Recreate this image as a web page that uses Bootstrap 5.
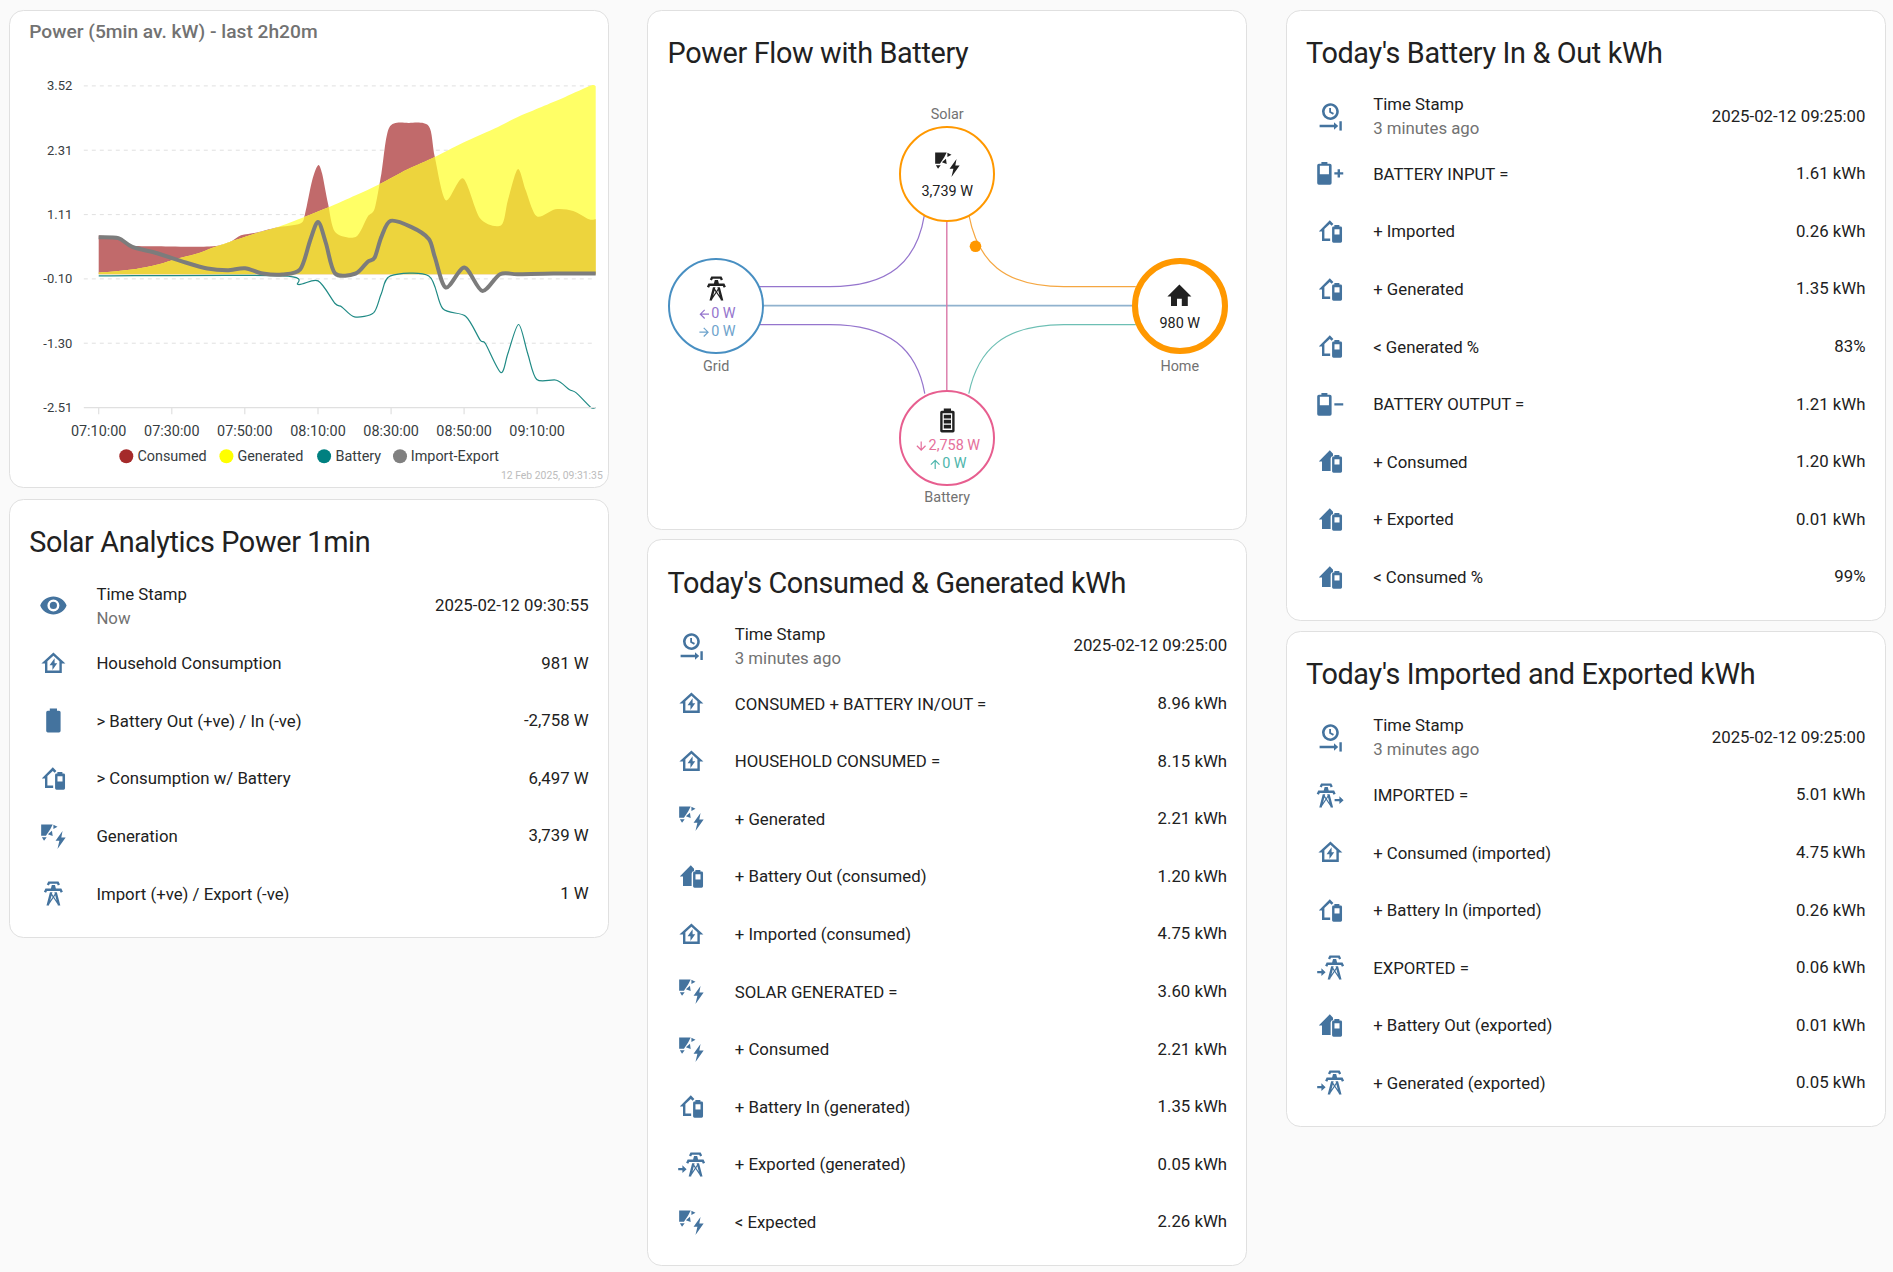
<!DOCTYPE html>
<html lang="en">
<head>
<meta charset="utf-8">
<title>Solar dashboard</title>
<link href="https://cdn.jsdelivr.net/npm/bootstrap@5.3.0/dist/css/bootstrap.min.css" rel="stylesheet">
<style>
html,body{background:#fafafa;}
body{font-family:Roboto,"Liberation Sans",sans-serif;color:#212121;font-size:16.8px;margin:0;}
.board{gap:38.5px;padding:9.6px 7.4px 0 9px;}
.lane{flex:1 1 0;min-width:0;gap:9.6px;}
.tile{border:1.2px solid #e0e0e0;border-radius:14.4px;background:#fff;}
.tile-chart{margin-bottom:1.2px;}
.hdr{font-size:28.8px;letter-spacing:-0.012em;line-height:48px;height:81.6px;padding:18.4px 19.2px 0;color:#212121;}
.ents{gap:9.6px;padding:0 19.2px 19.2px;}
.ent{height:48px;}
.ent-ic{width:48px;flex:none;}
.ent-ic svg{width:28.8px;height:28.8px;fill:#44739e;}
.ent-name{margin-left:19.2px;line-height:24px;}
.ent-sub{color:#727272;}
.chart-title{height:50px;padding:10px 19.2px 0;font-size:19.2px;line-height:22px;font-weight:500;color:#727272;}
.chart-box svg{display:block;}
.chart-box text{font-family:Roboto,"Liberation Sans",sans-serif;fill:#373d3f;}
.ax-y{font-size:13px;}
.ax-x{font-size:14.4px;}
.leg{font-size:14.4px;}
.stamp{font-size:10.4px;fill:#bcbcbc !important;}
.flow{height:436.6px;font-size:14.4px;}
.flow-lines{position:absolute;left:0;top:0;}
.node{position:absolute;width:96px;height:96px;border-radius:50%;border:2.4px solid;background:#fff;line-height:18px;padding-top:4px;}
.node svg{width:28.8px;height:28.8px;flex:none;fill:#212121;}
.node .arr{width:14.4px;height:14.4px;}
.n-solar{left:250.8px;top:33.6px;border-color:#ff9800;}
.n-grid{left:19.8px;top:165.4px;border-color:#488fc2;}
.n-home{left:483.4px;top:165.4px;border:6px solid #ff9800;}
.n-batt{left:250.8px;top:297.6px;border-color:#e75e8f;}
.nlabel{position:absolute;width:96px;text-align:center;color:#727272;line-height:18px;}
.l-solar{left:250.8px;top:13.6px;}
.l-grid{left:19.8px;top:265.6px;}
.l-home{left:483.4px;top:265.6px;}
.l-batt{left:250.8px;top:397.2px;}
.gap-t{margin-top:4px;}
.gap-u{margin-top:2px;}
.c-in{color:#9575cd;}.c-in svg{fill:#9575cd;}
.c-out{color:#6ea3cc;}.c-out svg{fill:#6ea3cc;}
.c-bi{color:#e5709b;}.c-bi svg{fill:#e5709b;}
.c-bo{color:#4db6ac;}.c-bo svg{fill:#4db6ac;}
</style>
</head>
<body>
<svg class="d-none" xmlns="http://www.w3.org/2000/svg">
<symbol id="i-eye" viewBox="0 0 24 24"><path d="M12,9A3,3 0 0,0 9,12A3,3 0 0,0 12,15A3,3 0 0,0 15,12A3,3 0 0,0 12,9M12,17A5,5 0 0,1 7,12A5,5 0 0,1 12,7A5,5 0 0,1 17,12A5,5 0 0,1 12,17M12,4.5C7,4.5 2.73,7.61 1,12C2.73,16.39 7,19.5 12,19.5C17,19.5 21.27,16.39 23,12C21.27,7.61 17,4.5 12,4.5Z"/></symbol>
<symbol id="i-hbolt" viewBox="0 0 24 24"><path fill-rule="evenodd" d="M12 3L2 12H5V20H19V12H22L12 3ZM7 18V10.19L12 5.69L17 10.19V18Z"/><path d="M13 7.8L8.8 13.6H11.2V17.6L15.2 11.8H13Z"/></symbol>
<symbol id="i-batt" viewBox="0 0 24 24"><path d="M16.67,4H15V2H9V4H7.33A1.33,1.33 0 0,0 6,5.33V20.67C6,21.4 6.6,22 7.33,22H16.67A1.33,1.33 0 0,0 18,20.67V5.33C18,4.6 17.4,4 16.67,4Z"/></symbol>
<symbol id="i-hbo" viewBox="0 0 24 24"><path d="M11.5 2.8L2.3 12H5V20H11.8V18H7V10L11.5 5.8L13 7.3L14.5 5.8Z"/><path fill-rule="evenodd" d="M15.3 6.7V8H14.6A1.2 1.2 0 0 0 13.4 9.2V20.3A1.2 1.2 0 0 0 14.6 21.5H20.5A1.2 1.2 0 0 0 21.7 20.3V9.2A1.2 1.2 0 0 0 20.5 8H19.5V6.7ZM15.4 10.3H19.6V14.5H15.4Z"/></symbol>
<symbol id="i-hbs" viewBox="0 0 24 24"><path d="M11.5 2.8L2.3 12H5V20H12.2V9.5A2.2 2.2 0 0 1 14.2 7.4V5.7Z"/><path fill-rule="evenodd" d="M15.3 6.7V8H14.6A1.2 1.2 0 0 0 13.4 9.2V20.3A1.2 1.2 0 0 0 14.6 21.5H20.5A1.2 1.2 0 0 0 21.7 20.3V9.2A1.2 1.2 0 0 0 20.5 8H19.5V6.7ZM15.4 10.3H19.6V14.5H15.4Z"/></symbol>
<symbol id="i-solar" viewBox="0 0 24 24"><path d="M1.8 2H11.4L9.4 6L5.8 11.4H1.8ZM12 2.2L15.4 4L12 5.8ZM10.8 7.2L7.4 10.2L11.4 11.6ZM2.4 12.8H6.4L4.2 15.6ZM19.6 7.6L13.8 15.6H17L15.4 22.6L22.2 13H18.6Z"/></symbol>
<symbol id="i-tower" viewBox="0 0 24 24"><path d="M8.28,5.45L6.5,4.55L7.76,2H16.23L17.5,4.55L15.72,5.44L15,4H9L8.28,5.45M18.62,8H14.09L13.3,5H10.7L9.91,8H5.38L4.1,10.55L5.89,11.44L6.62,10H17.38L18.1,11.45L19.89,10.56L18.62,8M17.77,22H15.7L15.46,21.1L12,15.9L8.53,21.1L8.3,22H6.23L9.12,11H11.19L10.83,12.35L12,14.1L13.16,12.35L12.81,11H14.88L17.77,22M11.4,15L10.5,13.65L9.32,18.13L11.4,15M14.68,18.12L13.5,13.64L12.6,15L14.68,18.12Z"/></symbol>
<symbol id="i-timp" viewBox="0 0 24 24"><g transform="translate(-3.5 0)"><path d="M8.28,5.45L6.5,4.55L7.76,2H16.23L17.5,4.55L15.72,5.44L15,4H9L8.28,5.45M18.62,8H14.09L13.3,5H10.7L9.91,8H5.38L4.1,10.55L5.89,11.44L6.62,10H17.38L18.1,11.45L19.89,10.56L18.62,8M17.77,22H15.7L15.46,21.1L12,15.9L8.53,21.1L8.3,22H6.23L9.12,11H11.19L10.83,12.35L12,14.1L13.16,12.35L12.81,11H14.88L17.77,22M11.4,15L10.5,13.65L9.32,18.13L11.4,15M14.68,18.12L13.5,13.64L12.6,15L14.68,18.12Z"/></g><path d="M15.5 15.1H19.5V12.8L23 16L19.5 19.2V16.9H15.5Z"/></symbol>
<symbol id="i-texp" viewBox="0 0 24 24"><g transform="translate(3.5 0)"><path d="M8.28,5.45L6.5,4.55L7.76,2H16.23L17.5,4.55L15.72,5.44L15,4H9L8.28,5.45M18.62,8H14.09L13.3,5H10.7L9.91,8H5.38L4.1,10.55L5.89,11.44L6.62,10H17.38L18.1,11.45L19.89,10.56L18.62,8M17.77,22H15.7L15.46,21.1L12,15.9L8.53,21.1L8.3,22H6.23L9.12,11H11.19L10.83,12.35L12,14.1L13.16,12.35L12.81,11H14.88L17.77,22M11.4,15L10.5,13.65L9.32,18.13L11.4,15M14.68,18.12L13.5,13.64L12.6,15L14.68,18.12Z"/></g><path d="M1 15.1H4.5V12.8L8 16L4.5 19.2V16.9H1Z"/></symbol>
<symbol id="i-clock" viewBox="0 0 24 24"><path d="M12,1C8.14,1 5,4.14 5,8A7,7 0 0,0 12,15C15.86,15 19,11.87 19,8C19,4.14 15.86,1 12,1M12,3.15C14.67,3.15 16.85,5.32 16.85,8C16.85,10.68 14.67,12.85 12,12.85A4.85,4.85 0 0,1 7.15,8A4.85,4.85 0 0,1 12,3.15M11,5V8.69L14.19,10.53L14.94,9.23L12.5,7.82V5M15,16.8V18.9H3V21.1H15V23.2L18.5,20ZM19.5,16V24H21.5V16Z"/></symbol>
<symbol id="i-bplus" viewBox="0 0 24 24"><path fill-rule="evenodd" d="M4.5 2.5V4H2.4A1.4 1.4 0 0 0 1 5.4V20.1A1.4 1.4 0 0 0 2.4 21.5H11.6A1.4 1.4 0 0 0 13 20.1V5.4A1.4 1.4 0 0 0 11.6 4H9.5V2.5ZM3.2 5.6H10.8V12.8H3.2Z"/><path d="M18 8.5H20V11H22.7V13H20V15.5H18V13H15.3V11H18Z"/></symbol>
<symbol id="i-bminus" viewBox="0 0 24 24"><path fill-rule="evenodd" d="M4.5 2.5V4H2.4A1.4 1.4 0 0 0 1 5.4V20.1A1.4 1.4 0 0 0 2.4 21.5H11.6A1.4 1.4 0 0 0 13 20.1V5.4A1.4 1.4 0 0 0 11.6 4H9.5V2.5ZM3.2 5.6H10.8V12.8H3.2Z"/><path d="M15.3 11H22.7V13H15.3Z"/></symbol>
<symbol id="i-home" viewBox="0 0 24 24"><path d="M10,20V14H14V20H19V12H22L12,2L2,12H5V20H10Z"/></symbol>
<symbol id="i-bhigh" viewBox="0 0 24 24"><path fill-rule="evenodd" d="M16.67,4H15V2H9V4H7.33A1.33,1.33 0 0,0 6,5.33V20.67C6,21.4 6.6,22 7.33,22H16.67A1.33,1.33 0 0,0 18,20.67V5.33C18,4.6 17.4,4 16.67,4ZM8 6H16V20H8Z"/><path d="M9 7.2H15V10.4H9ZM9 11.4H15V14.6H9ZM9 15.6H15V18.8H9Z"/></symbol>
<symbol id="a-l" viewBox="0 0 24 24"><path d="M20,11V13H8L13.5,18.5L12.08,19.92L4.16,12L12.08,4.08L13.5,5.5L8,11H20Z"/></symbol>
<symbol id="a-r" viewBox="0 0 24 24"><path d="M4,11V13H16L10.5,18.5L11.92,19.92L19.84,12L11.92,4.08L10.5,5.5L16,11H4Z"/></symbol>
<symbol id="a-d" viewBox="0 0 24 24"><path d="M11,4H13V16L18.5,10.5L19.92,11.92L12,19.84L4.08,11.92L5.5,10.5L11,16V4Z"/></symbol>
<symbol id="a-u" viewBox="0 0 24 24"><path d="M13,20H11V8L5.5,13.5L4.08,12.08L12,4.16L19.92,12.08L18.5,13.5L13,8V20Z"/></symbol>
</svg>

<div class="board d-flex align-items-start">

<!-- LEFT -->
<div class="lane d-flex flex-column">
  <div class="tile tile-chart chart-box">
    <div class="chart-title">Power (5min av. kW) - last 2h20m</div>
    <svg id="chart" width="597" height="426.6" xmlns="http://www.w3.org/2000/svg">
      <defs><clipPath id="gen-clip"><path id="gen-clip-p"/></clipPath></defs>
      <g transform="translate(-10.2 -60.8)">
        <g stroke="#e0e0e0" stroke-width="1" stroke-dasharray="4 4">
          <line x1="84" x2="592" y1="85.7" y2="85.7"/>
          <line x1="84" x2="592" y1="150" y2="150"/>
          <line x1="84" x2="592" y1="214.4" y2="214.4"/>
          <line x1="84" x2="592" y1="278.7" y2="278.7"/>
          <line x1="84" x2="592" y1="343" y2="343"/>
        </g>
        <path id="p-con" fill="#c16a6b"/>
        <path id="p-gen" fill="#ffff66"/>
        <path id="p-mix" fill="#edd43d" clip-path="url(#gen-clip)"/>
        <path id="p-bat" fill="none" stroke="#1f8a85" stroke-width="1.2"/>
        <path id="p-imp" fill="none" stroke="#7c7c7c" stroke-width="4" stroke-linejoin="round"/>
        <g stroke="#e0e0e0" stroke-width="1.2">
          <line x1="84" x2="596" y1="407.4" y2="407.4"/>
          <line x1="98.9" x2="98.9" y1="407" y2="414"/>
          <line x1="172" x2="172" y1="407" y2="414"/>
          <line x1="245" x2="245" y1="407" y2="414"/>
          <line x1="318.2" x2="318.2" y1="407" y2="414"/>
          <line x1="391.3" x2="391.3" y1="407" y2="414"/>
          <line x1="464.3" x2="464.3" y1="407" y2="414"/>
          <line x1="537.3" x2="537.3" y1="407" y2="414"/>
        </g>
        <g class="ax-y" text-anchor="end" dominant-baseline="central">
          <text x="72.5" y="85.7">3.52</text>
          <text x="72.5" y="150">2.31</text>
          <text x="72.5" y="214.4">1.11</text>
          <text x="72.5" y="278.7">-0.10</text>
          <text x="72.5" y="343">-1.30</text>
          <text x="72.5" y="407.4">-2.51</text>
        </g>
        <g class="ax-x" text-anchor="middle" dominant-baseline="central">
          <text x="98.9" y="431">07:10:00</text>
          <text x="172" y="431">07:30:00</text>
          <text x="245" y="431">07:50:00</text>
          <text x="318.2" y="431">08:10:00</text>
          <text x="391.3" y="431">08:30:00</text>
          <text x="464.3" y="431">08:50:00</text>
          <text x="537.3" y="431">09:10:00</text>
        </g>
        <circle cx="126.5" cy="456" r="7" fill="#a52a2a"/>
        <circle cx="226.6" cy="456" r="7" fill="#ffff00"/>
        <circle cx="324.3" cy="456" r="7" fill="#008080"/>
        <circle cx="400.2" cy="456" r="7" fill="#808080"/>
        <g class="leg" dominant-baseline="central">
          <text x="137.6" y="456">Consumed</text>
          <text x="237.6" y="456">Generated</text>
          <text x="335.7" y="456">Battery</text>
          <text x="411" y="456">Import-Export</text>
        </g>
        <text class="stamp" x="603" y="475" text-anchor="end" dominant-baseline="central">12 Feb 2025, 09:31:35</text>
      </g>
    </svg>
  </div>

  <div class="tile">
    <div class="hdr">Solar Analytics Power 1min</div>
    <div class="ents d-flex flex-column">
      <div class="ent d-flex align-items-center"><div class="ent-ic d-flex justify-content-center"><svg><use href="#i-eye"/></svg></div><div class="ent-name flex-grow-1">Time Stamp<div class="ent-sub">Now</div></div><div>2025-02-12 09:30:55</div></div>
      <div class="ent d-flex align-items-center"><div class="ent-ic d-flex justify-content-center"><svg><use href="#i-hbolt"/></svg></div><div class="ent-name flex-grow-1">Household Consumption</div><div>981 W</div></div>
      <div class="ent d-flex align-items-center"><div class="ent-ic d-flex justify-content-center"><svg><use href="#i-batt"/></svg></div><div class="ent-name flex-grow-1">&gt; Battery Out (+ve) / In (-ve)</div><div>-2,758 W</div></div>
      <div class="ent d-flex align-items-center"><div class="ent-ic d-flex justify-content-center"><svg><use href="#i-hbo"/></svg></div><div class="ent-name flex-grow-1">&gt; Consumption w/ Battery</div><div>6,497 W</div></div>
      <div class="ent d-flex align-items-center"><div class="ent-ic d-flex justify-content-center"><svg><use href="#i-solar"/></svg></div><div class="ent-name flex-grow-1">Generation</div><div>3,739 W</div></div>
      <div class="ent d-flex align-items-center"><div class="ent-ic d-flex justify-content-center"><svg><use href="#i-tower"/></svg></div><div class="ent-name flex-grow-1">Import (+ve) / Export (-ve)</div><div>1 W</div></div>
    </div>
  </div>
</div>

<!-- MIDDLE -->
<div class="lane d-flex flex-column">
  <div class="tile">
    <div class="hdr">Power Flow with Battery</div>
    <div class="flow position-relative">
      <svg class="flow-lines" width="597" height="436" xmlns="http://www.w3.org/2000/svg">
        <g transform="translate(-648.2 -92.4)" fill="none" stroke-width="1.2">
          <path d="M924.7 215C917 262 890 287 830 287L759 287" stroke="#9575cd"/>
          <path d="M759 325L830 325C890 325 917 350 925 394" stroke="#9575cd"/>
          <path d="M969 215C978 262 1004 287 1064 287L1136 287" stroke="#f5a742"/>
          <path d="M1136 325L1064 325C1004 325 978 350 969 394" stroke="#6dbfb4"/>
          <path d="M763 306H1134" stroke="#90b2ce" stroke-width="1.6"/>
          <path d="M947 221V392" stroke="#da78a8" stroke-width="1.4"/>
          <circle cx="975.7" cy="246.7" r="5.8" fill="#ff9800"/>
        </g>
      </svg>
      <div class="nlabel l-solar">Solar</div>
      <div class="node n-solar d-flex flex-column align-items-center justify-content-center"><svg><use href="#i-solar"/></svg><div class="gap-t">3,739 W</div></div>
      <div class="node n-grid d-flex flex-column align-items-center justify-content-center"><svg><use href="#i-tower"/></svg>
        <div class="c-in d-flex align-items-center gap-u"><svg class="arr"><use href="#a-l"/></svg>0 W</div>
        <div class="c-out d-flex align-items-center"><svg class="arr"><use href="#a-r"/></svg>0 W</div></div>
      <div class="nlabel l-grid">Grid</div>
      <div class="node n-home d-flex flex-column align-items-center justify-content-center"><svg><use href="#i-home"/></svg><div class="gap-t">980 W</div></div>
      <div class="nlabel l-home">Home</div>
      <div class="node n-batt d-flex flex-column align-items-center justify-content-center"><svg><use href="#i-bhigh"/></svg>
        <div class="c-bi d-flex align-items-center gap-u"><svg class="arr"><use href="#a-d"/></svg>2,758 W</div>
        <div class="c-bo d-flex align-items-center"><svg class="arr"><use href="#a-u"/></svg>0 W</div></div>
      <div class="nlabel l-batt">Battery</div>
    </div>
  </div>

  <div class="tile">
    <div class="hdr">Today's Consumed &amp; Generated kWh</div>
    <div class="ents d-flex flex-column">
      <div class="ent d-flex align-items-center"><div class="ent-ic d-flex justify-content-center"><svg><use href="#i-clock"/></svg></div><div class="ent-name flex-grow-1">Time Stamp<div class="ent-sub">3 minutes ago</div></div><div>2025-02-12 09:25:00</div></div>
      <div class="ent d-flex align-items-center"><div class="ent-ic d-flex justify-content-center"><svg><use href="#i-hbolt"/></svg></div><div class="ent-name flex-grow-1">CONSUMED + BATTERY IN/OUT =</div><div>8.96 kWh</div></div>
      <div class="ent d-flex align-items-center"><div class="ent-ic d-flex justify-content-center"><svg><use href="#i-hbolt"/></svg></div><div class="ent-name flex-grow-1">HOUSEHOLD CONSUMED =</div><div>8.15 kWh</div></div>
      <div class="ent d-flex align-items-center"><div class="ent-ic d-flex justify-content-center"><svg><use href="#i-solar"/></svg></div><div class="ent-name flex-grow-1">+ Generated</div><div>2.21 kWh</div></div>
      <div class="ent d-flex align-items-center"><div class="ent-ic d-flex justify-content-center"><svg><use href="#i-hbs"/></svg></div><div class="ent-name flex-grow-1">+ Battery Out (consumed)</div><div>1.20 kWh</div></div>
      <div class="ent d-flex align-items-center"><div class="ent-ic d-flex justify-content-center"><svg><use href="#i-hbolt"/></svg></div><div class="ent-name flex-grow-1">+ Imported (consumed)</div><div>4.75 kWh</div></div>
      <div class="ent d-flex align-items-center"><div class="ent-ic d-flex justify-content-center"><svg><use href="#i-solar"/></svg></div><div class="ent-name flex-grow-1">SOLAR GENERATED =</div><div>3.60 kWh</div></div>
      <div class="ent d-flex align-items-center"><div class="ent-ic d-flex justify-content-center"><svg><use href="#i-solar"/></svg></div><div class="ent-name flex-grow-1">+ Consumed</div><div>2.21 kWh</div></div>
      <div class="ent d-flex align-items-center"><div class="ent-ic d-flex justify-content-center"><svg><use href="#i-hbo"/></svg></div><div class="ent-name flex-grow-1">+ Battery In (generated)</div><div>1.35 kWh</div></div>
      <div class="ent d-flex align-items-center"><div class="ent-ic d-flex justify-content-center"><svg><use href="#i-texp"/></svg></div><div class="ent-name flex-grow-1">+ Exported (generated)</div><div>0.05 kWh</div></div>
      <div class="ent d-flex align-items-center"><div class="ent-ic d-flex justify-content-center"><svg><use href="#i-solar"/></svg></div><div class="ent-name flex-grow-1">&lt; Expected</div><div>2.26 kWh</div></div>
    </div>
  </div>
</div>

<!-- RIGHT -->
<div class="lane d-flex flex-column">
  <div class="tile">
    <div class="hdr">Today's Battery In &amp; Out kWh</div>
    <div class="ents d-flex flex-column">
      <div class="ent d-flex align-items-center"><div class="ent-ic d-flex justify-content-center"><svg><use href="#i-clock"/></svg></div><div class="ent-name flex-grow-1">Time Stamp<div class="ent-sub">3 minutes ago</div></div><div>2025-02-12 09:25:00</div></div>
      <div class="ent d-flex align-items-center"><div class="ent-ic d-flex justify-content-center"><svg><use href="#i-bplus"/></svg></div><div class="ent-name flex-grow-1">BATTERY INPUT =</div><div>1.61 kWh</div></div>
      <div class="ent d-flex align-items-center"><div class="ent-ic d-flex justify-content-center"><svg><use href="#i-hbo"/></svg></div><div class="ent-name flex-grow-1">+ Imported</div><div>0.26 kWh</div></div>
      <div class="ent d-flex align-items-center"><div class="ent-ic d-flex justify-content-center"><svg><use href="#i-hbo"/></svg></div><div class="ent-name flex-grow-1">+ Generated</div><div>1.35 kWh</div></div>
      <div class="ent d-flex align-items-center"><div class="ent-ic d-flex justify-content-center"><svg><use href="#i-hbo"/></svg></div><div class="ent-name flex-grow-1">&lt; Generated %</div><div>83%</div></div>
      <div class="ent d-flex align-items-center"><div class="ent-ic d-flex justify-content-center"><svg><use href="#i-bminus"/></svg></div><div class="ent-name flex-grow-1">BATTERY OUTPUT =</div><div>1.21 kWh</div></div>
      <div class="ent d-flex align-items-center"><div class="ent-ic d-flex justify-content-center"><svg><use href="#i-hbs"/></svg></div><div class="ent-name flex-grow-1">+ Consumed</div><div>1.20 kWh</div></div>
      <div class="ent d-flex align-items-center"><div class="ent-ic d-flex justify-content-center"><svg><use href="#i-hbs"/></svg></div><div class="ent-name flex-grow-1">+ Exported</div><div>0.01 kWh</div></div>
      <div class="ent d-flex align-items-center"><div class="ent-ic d-flex justify-content-center"><svg><use href="#i-hbs"/></svg></div><div class="ent-name flex-grow-1">&lt; Consumed %</div><div>99%</div></div>
    </div>
  </div>

  <div class="tile">
    <div class="hdr">Today's Imported and Exported kWh</div>
    <div class="ents d-flex flex-column">
      <div class="ent d-flex align-items-center"><div class="ent-ic d-flex justify-content-center"><svg><use href="#i-clock"/></svg></div><div class="ent-name flex-grow-1">Time Stamp<div class="ent-sub">3 minutes ago</div></div><div>2025-02-12 09:25:00</div></div>
      <div class="ent d-flex align-items-center"><div class="ent-ic d-flex justify-content-center"><svg><use href="#i-timp"/></svg></div><div class="ent-name flex-grow-1">IMPORTED =</div><div>5.01 kWh</div></div>
      <div class="ent d-flex align-items-center"><div class="ent-ic d-flex justify-content-center"><svg><use href="#i-hbolt"/></svg></div><div class="ent-name flex-grow-1">+ Consumed (imported)</div><div>4.75 kWh</div></div>
      <div class="ent d-flex align-items-center"><div class="ent-ic d-flex justify-content-center"><svg><use href="#i-hbo"/></svg></div><div class="ent-name flex-grow-1">+ Battery In (imported)</div><div>0.26 kWh</div></div>
      <div class="ent d-flex align-items-center"><div class="ent-ic d-flex justify-content-center"><svg><use href="#i-texp"/></svg></div><div class="ent-name flex-grow-1">EXPORTED =</div><div>0.06 kWh</div></div>
      <div class="ent d-flex align-items-center"><div class="ent-ic d-flex justify-content-center"><svg><use href="#i-hbs"/></svg></div><div class="ent-name flex-grow-1">+ Battery Out (exported)</div><div>0.01 kWh</div></div>
      <div class="ent d-flex align-items-center"><div class="ent-ic d-flex justify-content-center"><svg><use href="#i-texp"/></svg></div><div class="ent-name flex-grow-1">+ Generated (exported)</div><div>0.05 kWh</div></div>
    </div>
  </div>
</div>
</div>

<script src="https://cdn.jsdelivr.net/npm/bootstrap@5.3.0/dist/js/bootstrap.bundle.min.js"></script>
<script>
(function(){
  var sx=1/2.529, sy=1/3, base=274;
  function P(a){var o=[];for(var i=0;i<a.length;i+=2){o.push([a[i]*sx,a[i+1]*sy]);}return o;}
  function smooth(p){
    var d='M'+p[0][0].toFixed(1)+' '+p[0][1].toFixed(1);
    for(var i=0;i<p.length-1;i++){
      var a=p[Math.max(i-1,0)],b=p[i],c=p[i+1],e=p[Math.min(i+2,p.length-1)],k=1/7;
      d+='C'+(b[0]+(c[0]-a[0])*k).toFixed(1)+' '+(b[1]+(c[1]-a[1])*k).toFixed(1)+' '+
        (c[0]-(e[0]-b[0])*k).toFixed(1)+' '+(c[1]-(e[1]-b[1])*k).toFixed(1)+' '+c[0].toFixed(1)+' '+c[1].toFixed(1);
    }
    return d;
  }
  function area(p){return smooth(p)+'L'+p[p.length-1][0].toFixed(1)+' '+base+'L'+p[0][0].toFixed(1)+' '+base+'Z';}
  var gen=P([250,817,300,812,345,806,400,793,450,775,500,760,540,742,600,718,650,698,700,682,770,650,830,622,900,585,960,552,1030,508,1100,470,1170,428,1260,380,1310,350,1370,320,1430,290,1495,256,1507,258]);
  var con=P([250,706,300,712,330,735,400,738,530,739,580,726,610,705,650,697,700,682,760,670,772,640,790,540,805,495,815,520,830,610,848,695,900,710,930,650,948,625,965,520,985,382,1035,368,1085,378,1100,470,1128,600,1172,535,1215,655,1268,675,1285,600,1310,507,1330,570,1358,648,1405,627,1450,632,1490,657,1507,657]);
  var imp=P([250,711,300,714,335,740,400,760,470,787,525,805,575,810,620,804,665,820,715,823,760,807,785,720,805,665,825,730,848,820,900,820,930,785,948,772,965,710,988,662,1040,680,1085,716,1100,770,1128,862,1175,802,1220,872,1265,822,1310,822,1400,820,1507,820]);
  var bat=P([250,827,715,827,755,853,805,842,848,910,865,920,897,950,945,938,965,880,988,827,1085,827,1120,925,1178,948,1215,1020,1228,1030,1267,1117,1285,1060,1312,973,1335,1060,1358,1138,1408,1140,1440,1168,1458,1178,1495,1222,1507,1222]);
  function set(id,d){document.getElementById(id).setAttribute('d',d);}
  set('p-gen',area(gen));set('gen-clip-p',area(gen));set('p-con',area(con));set('p-mix',area(con));
  set('p-imp',smooth(imp));set('p-bat',smooth(bat));
})();
</script>
</body>
</html>
